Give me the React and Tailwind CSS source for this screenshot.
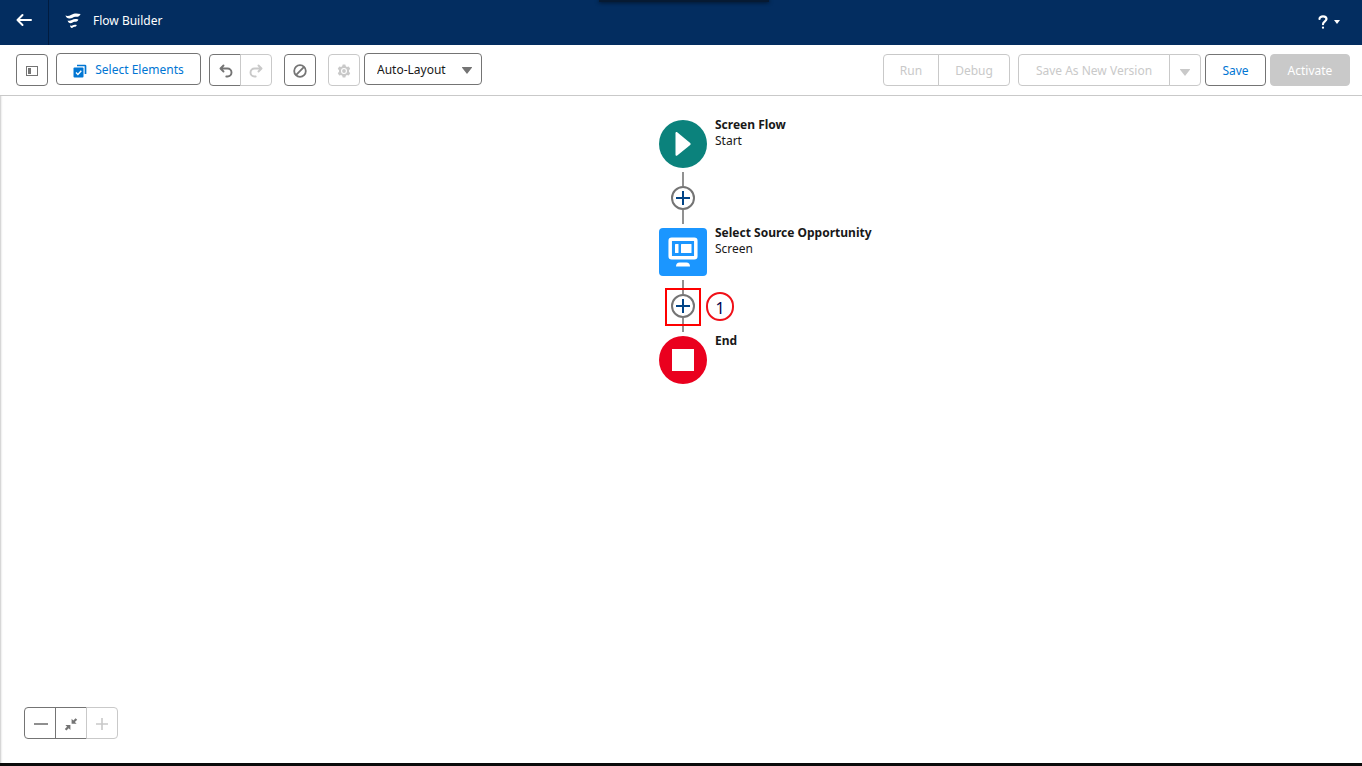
import clsx from "clsx";

const elements = [
  { id: "start", title: "Screen Flow", type: "Start", icon: StartIcon, shape: "rounded-full bg-[#0b827c]" },
  { id: "screen", title: "Select Source Opportunity", type: "Screen", icon: ScreenIcon, shape: "rounded bg-[#1b96ff]" },
  { id: "end", title: "End", type: "", icon: EndIcon, shape: "rounded-full bg-[#ea001e]" },
];

function StartIcon() {
  return (
    <svg viewBox="0 0 48 48" className="size-12" fill="#fff">
      <path d="M16.500 13.200c0-1 .9-1.500 1.700-.9l13 10.700c.6.500.6 1.400 0 1.900l-13 10.700c-.8.600-1.700.1-1.700-.8z" />
    </svg>
  );
}

function ScreenIcon() {
  return (
    <svg viewBox="0 0 48 48" className="size-12" fill="none">
      <rect x="11.200" y="11.200" width="25.600" height="18.600" rx="1.500" stroke="#fff" strokeWidth="3.500" />
      <rect x="16" y="16" width="3.500" height="9" rx="0.500" fill="#fff" />
      <rect x="22" y="16" width="10.500" height="9" rx="0.500" fill="#fff" />
      <path d="M17 38.500c0-2.400 1.400-4 3.500-4h7c2.100 0 3.500 1.600 3.500 4z" fill="#fff" />
    </svg>
  );
}

function EndIcon() {
  return (
    <svg viewBox="0 0 48 48" className="size-12" fill="#fff">
      <rect x="13" y="13" width="22" height="22" />
    </svg>
  );
}

function Caret({ className }) {
  return (
    <svg viewBox="0 0 10 7" className={clsx("h-[7px] w-2.5", className)} fill="currentColor">
      <path d="M.4 0h9.200c.4 0 .5.400.3.700L5.400 6.600c-.2.300-.6.300-.8 0L.1.700C-.1.400 0 0 .4 0z" />
    </svg>
  );
}

function IconButton({ label, className, disabled, children }) {
  return (
    <button
      type="button"
      aria-label={label}
      disabled={disabled}
      className={clsx(
        "flex size-8 shrink-0 items-center justify-center border bg-white pt-0.5",
        disabled ? "border-[#c9c9c9] text-[#c9c9c9]" : "border-[#747474] text-[#747474]",
        className
      )}
    >
      {children}
    </button>
  );
}

function TextButton({ className, disabled, children }) {
  return (
    <button type="button" disabled={disabled} className={clsx("h-8 border pt-0.5 text-center whitespace-nowrap", className)}>
      {children}
    </button>
  );
}

function Header() {
  return (
    <header className="relative flex h-[45px] items-stretch bg-[#032d60] text-white">
      <div className="absolute top-0 left-[44%] h-0.5 w-[170px] bg-[#061a33] shadow-[0_0_4px_#000]"></div>
      <button type="button" aria-label="Back" className="flex w-[49px] items-center justify-center border-r border-[#011c40] pb-1.5">
        <svg viewBox="0 0 16 14" className="h-3.5 w-4" fill="none" stroke="currentColor" strokeWidth="2" strokeLinecap="round" strokeLinejoin="round">
          <path d="M15 7H1.500M6.500 2l-5 5 5 5" />
        </svg>
      </button>
      <div className="flex items-center gap-3 pb-1 pl-4">
        <svg viewBox="0 0 16 16" className="size-4" fill="currentColor">
          <path d="M.4 2.600c1.800.6 3.800.4 6-.9C9.100.2 11.300.1 15.600.9c-.9 2.400-2.700 3-5 2.800-2-.2-3.400 1.800-6 1.900C2.500 5.700 1.200 4.600.4 2.600z" />
          <path d="M2.600 7.500c1.600.5 2.800.2 4.300-.6 1.900-1 3.600-1 6.500-.4-.7 2-2.100 2.400-3.700 2.300-1.500-.1-2.400 1.400-4.200 1.400-1.500 0-2.400-1-2.900-2.700z" />
          <path d="M5 12.600c1 .3 1.900.1 2.800-.4 1.200-.7 2.300-.7 4-.3-.5 1.500-1.400 1.800-2.400 1.800-1 0-1.500 1.200-2.600 1.200-1 0-1.500-.8-1.800-2.300z" />
        </svg>
        <h1>Flow Builder</h1>
      </div>
      <button type="button" aria-label="Help" className="ml-auto flex items-center gap-1.5 pr-[22px] pb-0.5">
        <svg viewBox="0 0 10 14" className="h-3.5 w-2.5" fill="none" stroke="currentColor" strokeWidth="2.200" strokeLinecap="round" strokeLinejoin="round">
          <path d="M1.500 4C1.500 2.300 2.900 1.300 5 1.300s3.500 1.100 3.500 2.800C8.500 6.400 5 6.400 5 9.200" />
          <path d="M5 12.600v.1" />
        </svg>
        <svg viewBox="0 0 6 4" className="h-1 w-1.5" fill="currentColor">
          <path d="M0 0h6L3 4z" />
        </svg>
      </button>
    </header>
  );
}

function Toolbar() {
  return (
    <div className="flex h-[51px] items-center border-b border-[#c9c9c9] bg-white pr-3 pl-4">
      <IconButton label="Toggle Toolbox" className="rounded">
        <svg viewBox="0 0 12 10" className="h-2.5 w-3" fill="none">
          <rect x="0.500" y="0.500" width="11" height="9" stroke="currentColor" />
          <rect x="2" y="2" width="3" height="6" fill="currentColor" />
        </svg>
      </IconButton>
      <button type="button" className="mb-0.5 ml-2 flex h-8 w-[145px] items-center justify-center gap-2 rounded border border-[#747474] pt-0.5 whitespace-nowrap text-[#0176d3]">
        <svg viewBox="0 0 14 14" className="mt-0.5 size-3.5" fill="none">
          <path d="M4 1.500h8c.3 0 .5.200.5.500v8" stroke="currentColor" strokeWidth="1.700" />
          <rect x="0.500" y="3.500" width="10" height="10" rx="1" fill="currentColor" />
          <path d="M3 8.500l1.900 1.900 3.400-3.600" stroke="#fff" strokeWidth="1.400" />
        </svg>
        Select Elements
      </button>
      <div className="ml-2 flex">
        <IconButton label="Undo" className="rounded-l pl-0.5">
          <svg viewBox="0 0 14 14" className="size-3.5" fill="none" stroke="currentColor" strokeWidth="1.900" strokeLinecap="round" strokeLinejoin="round">
            <path d="M4.500 1.500L1.500 4.500l3 3M2 4.500h6.500a4 4 0 0 1 0 8H7.300" />
          </svg>
        </IconButton>
        <IconButton label="Redo" disabled className="-ml-px rounded-r">
          <svg viewBox="0 0 14 14" className="size-3.5" fill="none" stroke="currentColor" strokeWidth="1.900" strokeLinecap="round" strokeLinejoin="round">
            <path d="M9.500 1.500l3 3-3 3M12 4.500H5.500a4 4 0 0 0 0 8h1.200" />
          </svg>
        </IconButton>
      </div>
      <IconButton label="Show Errors" className="ml-3 rounded">
        <svg viewBox="0 0 14 14" className="size-3.5" fill="none" stroke="currentColor" strokeWidth="1.800">
          <circle cx="7" cy="7" r="5.800" />
          <path d="M3.200 10.800l7.600-7.600" />
        </svg>
      </IconButton>
      <IconButton label="View Properties" disabled className="ml-3 rounded">
        <svg viewBox="0 0 14 14" className="size-3.5" fill="currentColor">
          <path
            fillRule="evenodd"
            d="M5.700.5h2.600l.5 1.800 1.100.6 1.900-.5 1.400 2.400L12 6.300v1.400l1.200 1.500-1.400 2.400-1.900-.5-1.100.6-.5 1.800H5.700l-.5-1.800-1.100-.6-1.900.5L.8 9.200 2 7.700V6.300L.8 4.800l1.400-2.400 1.900.5 1.100-.6zM7 4a3 3 0 1 0 0 6 3 3 0 0 0 0-6z"
          />
          <circle cx="7" cy="7" r="1.900" />
        </svg>
      </IconButton>
      <div className="relative mb-0.5 ml-1">
        <select aria-label="Layout" className="h-8 w-[118px] appearance-none rounded border border-[#747474] bg-white pt-0.5 pl-3 text-[#181818]">
          <option>Auto-Layout</option>
          <option>Free-Form</option>
        </select>
        <Caret className="pointer-events-none absolute top-3.5 right-2.5 text-[#747474]" />
      </div>

      <div className="ml-auto flex">
        <TextButton disabled className="w-14 rounded-l border-[#c9c9c9] text-[#c9c9c9]">Run</TextButton>
        <TextButton disabled className="-ml-px w-[72px] rounded-r border-[#c9c9c9] text-[#c9c9c9]">Debug</TextButton>
      </div>
      <div className="ml-2 flex">
        <TextButton disabled className="w-[152px] rounded-l border-[#c9c9c9] text-[#c9c9c9]">Save As New Version</TextButton>
        <IconButton label="More save options" disabled className="-ml-px rounded-r">
          <Caret className="mt-0.5" />
        </IconButton>
      </div>
      <TextButton className="ml-1 w-[61px] rounded border-[#747474] text-[#0176d3]">Save</TextButton>
      <TextButton disabled className="ml-1 w-20 rounded border-[#c9c9c9] bg-[#c9c9c9] text-white">Activate</TextButton>
    </div>
  );
}

function Connector({ step }) {
  return (
    <div className="relative my-1 flex h-[52px] w-12 flex-col items-center">
      <div className="w-0.5 flex-1 bg-[#919191]"></div>
      <button type="button" aria-label="Add Element" className="flex size-6 items-center justify-center rounded-full border-2 border-[#747474] bg-white">
        <svg viewBox="0 0 14 14" className="size-3.5 shrink-0" stroke="#014486" strokeWidth="2">
          <path d="M7 0v14M0 7h14" />
        </svg>
      </button>
      <div className="w-0.5 flex-1 bg-[#919191]"></div>
      {step && (
        <>
          <div className="pointer-events-none absolute top-2 left-1.5 h-[38px] w-9 border-2 border-[#fe0000]"></div>
          <div className="absolute top-3 left-[47px] flex h-[29px] w-7 items-center justify-center rounded-full border-2 border-[#f01018] pt-0.5 text-base text-[#000050]">
            {step}
          </div>
        </>
      )}
    </div>
  );
}

function FlowElement({ element }) {
  const Icon = element.icon;
  return (
    <div className="flex h-12 w-12 gap-2">
      <div className={clsx("size-12 shrink-0", element.shape)}>
        <Icon />
      </div>
      <div className="-mt-[3px] leading-4 whitespace-nowrap">
        <h2 className="font-bold">{element.title}</h2>
        <p>{element.type}</p>
      </div>
    </div>
  );
}

export default function App() {
  return (
    <div className="flex min-h-screen flex-col border-b-3 border-[#0b0b0b] bg-white font-['Noto_Sans','Open_Sans',sans-serif] text-[12px] text-[#181818]">
      <Header />
      <Toolbar />
      <main className="flex flex-1 flex-col bg-white shadow-[inset_3px_0_2px_-2px_#c9c9c9]">
        <div className="flex flex-col items-center pt-6 pl-1">
          <FlowElement element={elements[0]} />
          <Connector />
          <FlowElement element={elements[1]} />
          <Connector step={1} />
          <FlowElement element={elements[2]} />
        </div>
        <div className="mt-auto flex p-6">
          <IconButton label="Zoom Out" className="rounded-l pl-0.5">
            <svg viewBox="0 0 14 14" className="size-3.5" stroke="currentColor" strokeWidth="1.600">
              <path d="M0 7h14" />
            </svg>
          </IconButton>
          <IconButton label="Zoom to Fit" className="-ml-px">
            <svg viewBox="0 0 14 14" className="size-3.5" fill="currentColor">
              <path d="M7.600 1.800v5h5l-1.700-1.700 2.300-2.300L11.600 1.200 9.300 3.500z" />
              <path d="M6.400 13V8h-5l1.700 1.700L.8 12l1.600 1.600 2.300-2.300z" />
            </svg>
          </IconButton>
          <IconButton label="Zoom In" disabled className="-ml-px rounded-r">
            <svg viewBox="0 0 14 14" className="size-3.5" stroke="currentColor" strokeWidth="1.600">
              <path d="M7 1v12M1 7h12" />
            </svg>
          </IconButton>
        </div>
      </main>
    </div>
  );
}
